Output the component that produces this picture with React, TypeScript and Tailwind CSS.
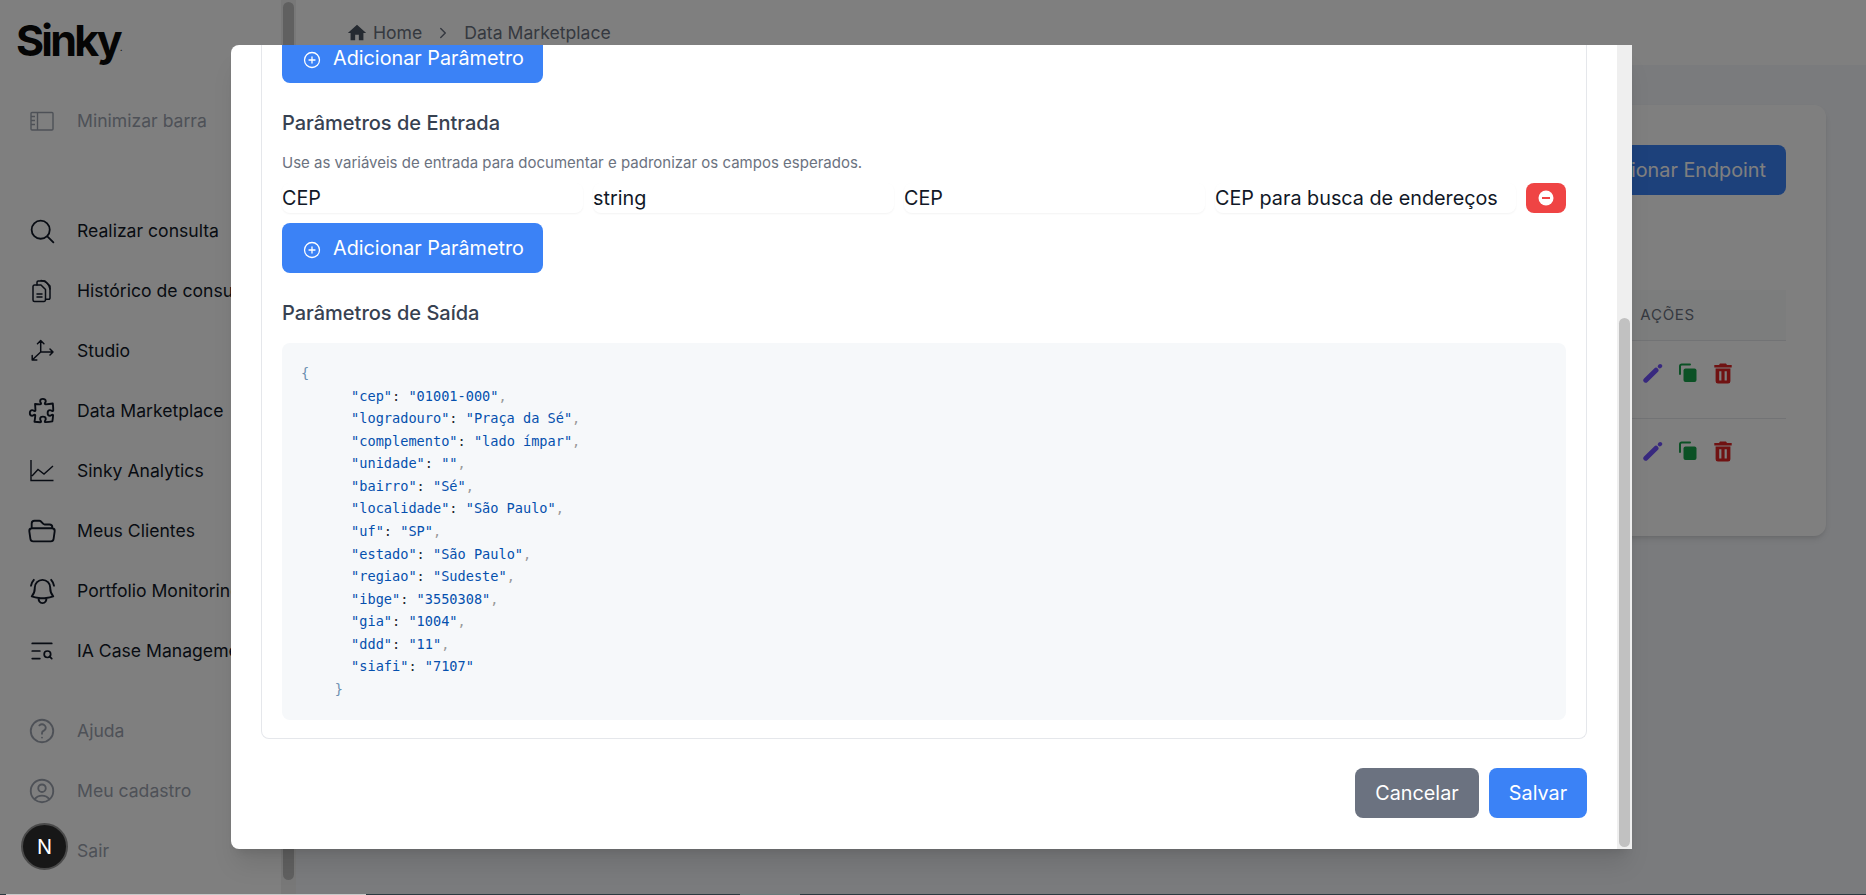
import React from "react";
import { ChevronRight, CirclePlus, TextSearch } from "lucide-react";
import { MdHome } from "react-icons/md";
import {
  HiOutlineMagnifyingGlass,
  HiOutlinePuzzlePiece,
  HiOutlineFolderOpen,
  HiOutlineBellAlert,
  HiOutlineQuestionMarkCircle,
  HiOutlineUserCircle,
} from "react-icons/hi2";

const MinimizeIcon = () => (
  <svg width="24" height="24" viewBox="0 0 24 24" fill="none" stroke="currentColor" strokeWidth="1.4">
    <rect x="1" y="3.5" width="22" height="17.5" rx="1" />
    <path d="M7.5 3.5V21M1 7.5h4M1 11.5h4M1 15.5h4" />
  </svg>
);
const DocsIcon = () => (
  <svg width="24" height="24" viewBox="0 0 24 24" fill="none" stroke="currentColor" strokeWidth="1.5" strokeLinejoin="round" strokeLinecap="round">
    <path d="M3 7.5a1.5 1.5 0 0 1 1.5-1.5H11l4.5 4.5V21a1.5 1.5 0 0 1-1.5 1.5H4.5A1.5 1.5 0 0 1 3 21V7.5Z" />
    <path d="M7 6V3.2A1.2 1.2 0 0 1 8.2 2H15l5 5v12a1.2 1.2 0 0 1-1.2 1.2H15.5" />
    <path d="M11 1.5c5 .5 8 4 9 8.5M7 15h5M7 18h5" />
  </svg>
);
const AxisIcon = () => (
  <svg width="24" height="24" viewBox="0 0 24 24" fill="none" stroke="currentColor" strokeWidth="1.5" strokeLinecap="round" strokeLinejoin="round">
    <path d="M10.7 13V1.5M7.5 4.7l3.2-3.2 3.2 3.2M10.7 13H23M20 10l3 3-3 3M10.7 13 2.2 21M2.2 16.5V21h4.6" />
  </svg>
);
const ChartIcon = () => (
  <svg width="24" height="24" viewBox="0 0 24 24" fill="none" stroke="currentColor" strokeWidth="1.4">
    <path d="M1 1v20.5h22.5M2 17l6-6.5 6 4.5 9-8" />
  </svg>
);
const PencilIcon = ({ cls }: { cls: string }) => (
  <svg width="20" height="20" viewBox="0 0 20 20" className={cls} fill="none" stroke="currentColor" strokeLinecap="round">
    <path d="M2.8 17.2 13 7.2" strokeWidth="5" />
    <path d="M16.8 3.4 17.2 3" strokeWidth="4" />
  </svg>
);
const CopyIcon = ({ cls }: { cls: string }) => (
  <svg width="20" height="20" viewBox="0 0 20 20" className={cls} fill="none">
    <path d="M2 11V3.2A1.7 1.7 0 0 1 3.7 1.5H12" stroke="currentColor" strokeWidth="2" strokeLinecap="round" />
    <rect x="5.5" y="5.5" width="13" height="13.5" rx="2" fill="currentColor" />
  </svg>
);
const TrashIcon = ({ cls }: { cls: string }) => (
  <svg width="20" height="22" viewBox="0 0 20 22" className={cls}>
    <path
      fill="currentColor"
      fillRule="evenodd"
      d="M7 1.5h6l1 1.6h4.7v2.4H1.3V3.1H6L7 1.5ZM2.6 6.5h14.8v12.7a2.3 2.3 0 0 1-2.3 2.3H4.9a2.3 2.3 0 0 1-2.3-2.3V6.5Zm3.6 2.7v9.3h2.2V9.2H6.2Zm5.4 0v9.3h2.2V9.2h-2.2Z"
    />
  </svg>
);

const navMain: { icon: React.ReactNode; label: string }[] = [
  { icon: <HiOutlineMagnifyingGlass size={29} />, label: "Realizar consulta" },
  { icon: <DocsIcon />, label: "Histórico de consultas" },
  { icon: <AxisIcon />, label: "Studio" },
  { icon: <HiOutlinePuzzlePiece size={30} />, label: "Data Marketplace" },
  { icon: <ChartIcon />, label: "Sinky Analytics" },
  { icon: <HiOutlineFolderOpen size={30} />, label: "Meus Clientes" },
  { icon: <HiOutlineBellAlert size={31} />, label: "Portfolio Monitoring" },
  { icon: <TextSearch size={26} strokeWidth={1.6} />, label: "IA Case Management" },
];
const navBottom: { icon: React.ReactNode; label: string }[] = [
  { icon: <HiOutlineQuestionMarkCircle size={30} />, label: "Ajuda" },
  { icon: <HiOutlineUserCircle size={30} />, label: "Meu cadastro" },
  { icon: <span className="block w-6" />, label: "Sair" },
];

const NavRow = ({ icon, label, muted }: { icon: React.ReactNode; label: string; muted?: boolean }) => (
  <div className={`flex h-[60px] items-center gap-[23px] pl-[30px] text-[17.6px] whitespace-nowrap ${muted ? "text-[#9ca3af]" : "text-[#111827]"}`}>
    <span className="flex h-6 w-6 items-center justify-center [&>svg]:shrink-0">{icon}</span>
    <span>{label}</span>
  </div>
);

const json: [string, string][] = [
  ["cep", "01001-000"],
  ["logradouro", "Praça da Sé"],
  ["complemento", "lado ímpar"],
  ["unidade", ""],
  ["bairro", "Sé"],
  ["localidade", "São Paulo"],
  ["uf", "SP"],
  ["estado", "São Paulo"],
  ["regiao", "Sudeste"],
  ["ibge", "3550308"],
  ["gia", "1004"],
  ["ddd", "11"],
  ["siafi", "7107"],
];

const AddParam = ({ cls = "" }: { cls?: string }) => (
  <button className={`flex h-[50px] w-[261px] items-center gap-[12px] rounded-lg bg-[#3b82f6] pt-[1px] pl-[21px] text-[19.8px] text-white ${cls}`}>
    <CirclePlus size={18} strokeWidth={1.7} className="mt-[2px]" />
    <span>Adicionar Parâmetro</span>
  </button>
);

const ParamInput = ({ value }: { value: string }) => (
  <input
    readOnly
    defaultValue={value}
    className="h-[30px] w-0 flex-1 rounded-lg bg-white text-[19.8px] text-[#111827] shadow-[0_1px_2px_rgba(0,0,0,0.05)] outline-none"
  />
);

const ActionRow = () => (
  <div className="flex h-[78px] items-start justify-end gap-[15px] border-b border-[#e5e7eb] pt-[22px] pr-[53px] last:border-b-0">
    <PencilIcon cls="text-[#7052ff]" />
    <CopyIcon cls="text-[#16a34a]" />
    <TrashIcon cls="text-[#e02424] -mt-[1px]" />
  </div>
);

export default function App() {
  return (
    <div className="relative flex h-screen w-full overflow-hidden bg-white font-['Inter',sans-serif]">
      <aside className="w-[281px] shrink-0 overflow-hidden bg-white">
        <div className="flex h-[91px] items-start pt-[15px] pl-[16px] text-[43px] leading-[50px] font-bold tracking-[-2.8px] text-[#0a0a0a]">
          Sinky<span className="mt-[27px] text-[10px] leading-[10px] font-normal tracking-normal">.</span>
        </div>
        <NavRow muted icon={<MinimizeIcon />} label="Minimizar barra" />
        <div className="h-[50px]" />
        {navMain.map((n) => (
          <NavRow key={n.label} icon={n.icon} label={n.label} />
        ))}
        <div className="h-5" />
        {navBottom.map((n) => (
          <NavRow key={n.label} muted icon={n.icon} label={n.label} />
        ))}
      </aside>

      <div className="flex w-[15px] shrink-0 flex-col bg-[#f1f1f1] px-[2px] pt-[2px] pb-[15px]">
        <div className="flex-1 rounded-md bg-[#c1c1c1]" />
      </div>

      <main className="flex min-w-0 flex-1 flex-col bg-[#f4f6fa]">
        <header className="flex h-[65px] items-center gap-[13px] bg-white pt-[1px] pl-[50px] text-[17.6px] text-[#6b7280]">
          <MdHome size={22} className="-mr-[8px] text-[#4b5563]" />
          <span>Home</span>
          <ChevronRight size={18} className="-mx-px" />
          <span>Data Marketplace</span>
        </header>
        <div className="px-10 pt-10">
          <section className="h-[431px] rounded-xl bg-white p-10 shadow-md">
            <div className="flex justify-end">
              <button className="flex h-[50px] items-center rounded-lg bg-[#3b82f6] px-5 pt-[1px] text-[19.8px] text-white">Adicionar Endpoint</button>
            </div>
            <div className="mt-[95px]">
              <div className="flex h-[51px] items-center justify-end border-b border-[#e5e7eb] bg-[#f9fafb] pr-[91px] text-[15px] tracking-wider text-[#6b7280] uppercase">
                Ações
              </div>
              <ActionRow />
              <ActionRow />
            </div>
          </section>
        </div>
      </main>

      <div className="absolute inset-0 bg-black/50 pt-[45px] pl-[231px]">
        <div className="flex h-[804px] w-[1401px] overflow-hidden rounded-l-lg bg-white shadow-xl">
          <div className="min-w-0 flex-1 overflow-hidden px-[30px]">
            <div className="rounded-b-lg border border-t-0 border-[#e5e7eb] px-5 pb-[18px]">
              <AddParam cls="-mt-[12px]" />
              <h3 className="mt-[26px] text-[20px] leading-[28px] font-medium text-[#374151]">Parâmetros de Entrada</h3>
              <p className="mt-4 text-[15px] leading-5 text-[#6b7280]">Use as variáveis de entrada para documentar e padronizar os campos esperados.</p>
              <div className="mt-[10px] flex gap-[10px]">
                <ParamInput value="CEP" />
                <ParamInput value="string" />
                <ParamInput value="CEP" />
                <ParamInput value="CEP para busca de endereços" />
                <button className="flex h-[30px] w-10 items-center justify-center rounded-lg bg-[#ef4444]">
                  <svg width="16" height="16" viewBox="0 0 16 16">
                    <circle cx="8" cy="8" r="7.5" fill="#fff" />
                    <rect x="4" y="7" width="8" height="2" fill="#ef4444" />
                  </svg>
                </button>
              </div>
              <AddParam cls="mt-[10px]" />
              <h3 className="mt-[26px] text-[20px] leading-[28px] font-medium text-[#374151]">Parâmetros de Saída</h3>
              <pre className="mt-4 rounded-lg bg-[#f6f8fa] px-5 pt-[19px] pb-[20px] font-['DejaVu_Sans_Mono',monospace] text-[13.6px] leading-[22.57px] whitespace-pre text-[#0550ae]">
                <span className="-ml-[1px] text-[#6b8fb0]">{"{"}</span>
                {"\n"}
                {json.map(([k, v], i) => (
                  <React.Fragment key={k}>
                    {"      "}
                    {`"${k}"`}
                    <span className="text-[#24292e]">:</span> {`"${v}"`}
                    {i < json.length - 1 && <span className="text-[#999]">,</span>}
                    {"\n"}
                  </React.Fragment>
                ))}
                {"    "}
                <span className="text-[#6b8fb0]">{"}"}</span>
              </pre>
            </div>
            <div className="mt-[29px] flex justify-end gap-[10px]">
              <button className="h-[50px] w-[124px] rounded-lg bg-[#6b7280] pt-[1px] text-[19.8px] text-white">Cancelar</button>
              <button className="h-[50px] w-[98px] rounded-lg bg-[#3b82f6] pt-[1px] text-[19.8px] text-white">Salvar</button>
            </div>
          </div>
          <div className="flex w-[15px] shrink-0 flex-col bg-[#efefef] pt-[273px] pr-[2px] pb-[2px] pl-[2px]">
            <div className="flex-1 rounded-md bg-[#c1c1c1]" />
          </div>
        </div>
      </div>

      <div className="absolute top-[823px] left-[21px] flex h-[47px] w-[47px] items-center justify-center rounded-full border-2 border-[#4a4a4a] bg-[#171717] text-[20px] font-normal text-white">
        N
      </div>

      <div className="absolute right-0 bottom-0 left-0 flex h-px bg-[#2b3a40]">
        <div className="ml-[6px] w-[360px] bg-[#c8c8c8]" />
        <div className="ml-[374px] w-[60px] bg-[#6a7a7a]" />
      </div>
    </div>
  );
}
